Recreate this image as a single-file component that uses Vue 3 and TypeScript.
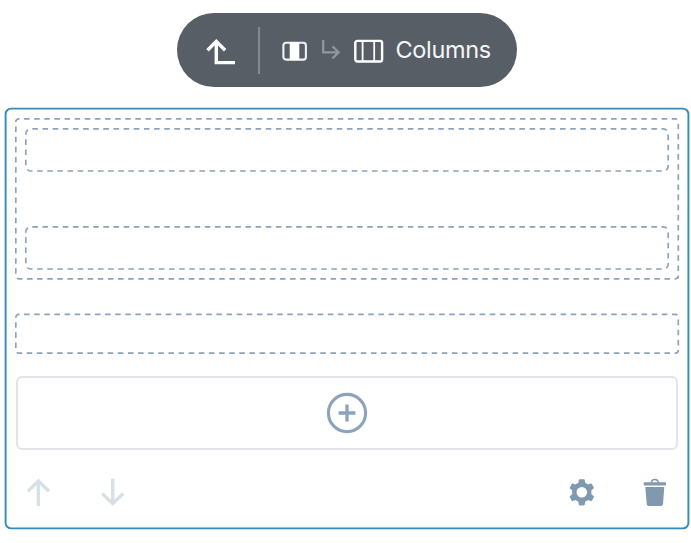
<script setup lang="ts">
import { defineComponent, h } from 'vue'

interface FrameProps {
  width: number
  height: number
  radius: number
  start: number
  count: number
  top: number
}

// Dashed outline whose dashes divide the perimeter evenly.
const DashedFrame = defineComponent({
  props: {
    width: { type: Number, required: true },
    height: { type: Number, required: true },
    radius: { type: Number, required: true },
    start: { type: Number, required: true },
    count: { type: Number, required: true },
    top: { type: Number, default: 0.8 },
  },
  setup(props: Readonly<FrameProps>) {
    return () =>
      h('svg', { width: props.width + 2, height: props.height + 2 }, [
        h('rect', {
          x: 0.8,
          y: props.top,
          width: props.width,
          height: props.height,
          rx: props.radius,
          fill: 'none',
          stroke: '#8ba4bb',
          'stroke-width': 1.7,
          pathLength: props.count * 10,
          'stroke-dasharray': '5.5 4.5',
          'stroke-dashoffset': -props.start,
        }),
      ])
  },
})
</script>

<template>
  <main class="page">
    <nav class="toolbar">
      <svg class="up" width="32" height="30" viewBox="0 0 32 30" fill="none" stroke="#fff" stroke-width="3.4">
        <path d="M1.5 12.2 10.3 3.4l8.8 8.8M10.3 4v20.6H29" />
      </svg>
      <span class="divider"></span>
      <svg class="column" width="26" height="20" viewBox="0 0 26 20">
        <rect x="1.4" y="1.8" width="22.5" height="16.8" rx="2.6" fill="none" stroke="#f1f2f3" stroke-width="2.1" />
        <path d="M7.7 1.2h9.6v18H7.7z" fill="#fff" />
      </svg>
      <svg class="nested" width="20" height="22" viewBox="0 0 20 22" fill="none" stroke="#92969d" stroke-width="2.3">
        <path d="M1.2.9v12.4h15.5M10.5 7.2l6.1 6.1-6.1 6.1" />
      </svg>
      <svg class="columns" width="30" height="24" viewBox="0 0 30 24" fill="none" stroke="#fff">
        <rect x="1.3" y="1.9" width="26.8" height="20.6" rx="2" stroke-width="2.4" />
        <path d="M8.6 2v20M20.2 2v20" stroke-width="1.8" />
      </svg>
      <span class="label">Columns</span>
    </nav>

    <section class="block">
      <svg class="outline" width="687" height="423">
        <rect x="1.6" y="1.6" width="682.8" height="419.8" rx="5.5" />
      </svg>
      <div class="group">
        <div class="group-outline">
          <DashedFrame :width="662.5" :height="160" :radius="3" :start="5.2" :count="162" />
        </div>
        <DashedFrame :width="642.4" :height="42.2" :radius="5" :start="1.5" :count="134" />
        <DashedFrame :width="642.4" :height="42.2" :radius="5" :start="1.5" :count="134" />
      </div>
      <div class="single">
        <DashedFrame :width="662.5" :height="38.8" :radius="3" :start="5.2" :count="138" :top="1.4" />
      </div>
      <button class="add" aria-label="Add block">
        <svg width="42" height="42" viewBox="0 0 42 42" fill="none" stroke="#8ba4bb">
          <circle cx="21" cy="21" r="18.6" stroke-width="3.1" />
          <path d="M12.6 21h16.8M21 12.6v16.8" stroke-width="3.3" />
        </svg>
      </button>
      <footer class="actions">
        <svg class="move" width="24" height="28" viewBox="0 0 24 28">
          <path d="M12.4 28V3M1.9 13.2 12.4 3.1l10.5 10.1" />
        </svg>
        <svg class="move down" width="24" height="28" viewBox="0 0 24 28">
          <path d="M12.7.8v25M2.2 15.6l10.5 10.1 10.5-10.1" />
        </svg>
        <svg class="settings" width="26" height="28" viewBox="0 0 26 28">
          <path transform="translate(0 .4)" fill-rule="evenodd" d="M10.7.8h4.2c.5 0 .8.3.9.8l.4 2.8 2.9 1.7 2.6-1c.5-.2.9 0 1.1.4l2 3.5c.3.4.2.9-.2 1.2l-2.2 1.7v4l2.2 1.7c.4.3.5.7.2 1.2l-2 3.5c-.2.4-.6.6-1.1.4l-2.6-1-2.9 1.7-.4 2.8c-.1.5-.4.8-.9.8h-4.2c-.5 0-.8-.3-.9-.8l-.4-2.8-2.9-1.7-2.6 1c-.5.2-.9 0-1.1-.4l-2-3.5c-.3-.5-.2-.9.2-1.2l2.2-1.7v-4L1 10.2c-.4-.3-.5-.8-.2-1.2l2-3.5c.2-.4.6-.6 1.1-.4l2.6 1 2.9-1.7.4-2.8c.1-.5.4-.8.9-.8ZM12.8 8.6a5.3 5.3 0 1 0 0 10.6 5.3 5.3 0 0 0 0-10.6Z" />
        </svg>
        <svg class="trash" width="24" height="28" viewBox="0 0 24 28">
          <path d="M1.5 4.3h20.7q.8 0 .8.8v1.7q0 .8-.8.8H1.5q-.8 0-.8-.8V5.1q0-.8.8-.8ZM2.3 9.1h19l-1.3 17q-.2 1.9-2 1.9H5.6q-1.7 0-1.9-1.9Z" />
          <path d="M8.4 4.6C8.6.3 15.1.3 15.3 4.6" class="handle" />
        </svg>
      </footer>
    </section>
  </main>
</template>

<style>
body {
  background: #fff;
}
</style>

<style scoped>
.page {
  box-sizing: border-box;
  width: 691px;
  height: 543px;
  padding-top: 13px;
  overflow: hidden;
}
.page :deep(svg) {
  display: block;
  flex: none;
  overflow: visible;
}
.toolbar {
  display: flex;
  align-items: flex-start;
  box-sizing: border-box;
  width: 339.4px;
  height: 74.4px;
  margin-left: 177.3px;
  padding-left: 0.7px;
  border-radius: 37.2px;
  background: #575e66;
}
.up {
  margin: 25px 0 0 28px;
}
.divider {
  width: 2px;
  height: 47px;
  margin: 14px 0 0 20px;
  background: #858a90;
}
.column {
  margin: 28px 0 0 22px;
}
.nested {
  margin: 26px 0 0 14px;
}
.columns {
  margin: 26px 0 0 12px;
}
.label {
  margin: 22px 0 0 11.5px;
  color: #f5f6f7;
  font: 400 23.5px/30px Inter, 'Liberation Sans', sans-serif;
  letter-spacing: -0.35px;
}
.block {
  position: relative;
  box-sizing: border-box;
  width: 687px;
  height: 423px;
  margin: 19.6px 0 0 4px;
  padding: 11px 0 0 11px;
}
.outline {
  position: absolute;
  top: 0;
  left: 0;
  pointer-events: none;
}
.outline rect {
  fill: none;
  stroke: #3489bd;
  stroke-width: 1.9;
}
.group {
  position: relative;
  display: flex;
  flex-direction: column;
  gap: 53.8px;
  box-sizing: border-box;
  height: 162px;
  padding: 10px;
}
.group-outline {
  position: absolute;
  top: 0;
  left: 0;
}
.single {
  height: 41px;
  margin-top: 33px;
}
.add {
  display: flex;
  align-items: center;
  justify-content: center;
  box-sizing: border-box;
  width: 662px;
  height: 74px;
  margin: 22px 0 0 1px;
  padding: 0;
  border: 2px solid #e2e4e7;
  border-radius: 6px;
  background: transparent;
}
.actions {
  display: flex;
  margin: 28px 0 0 11px;
}
.move {
  fill: none;
  stroke: #d8e0e7;
  stroke-width: 3.4;
}
.down {
  margin-left: 50px;
}
.settings {
  margin-left: 445px;
  fill: #8199af;
}
.trash {
  margin-left: 48px;
  fill: #8199af;
}
.handle {
  fill: none;
  stroke: #8199af;
  stroke-width: 1.5;
}
</style>
